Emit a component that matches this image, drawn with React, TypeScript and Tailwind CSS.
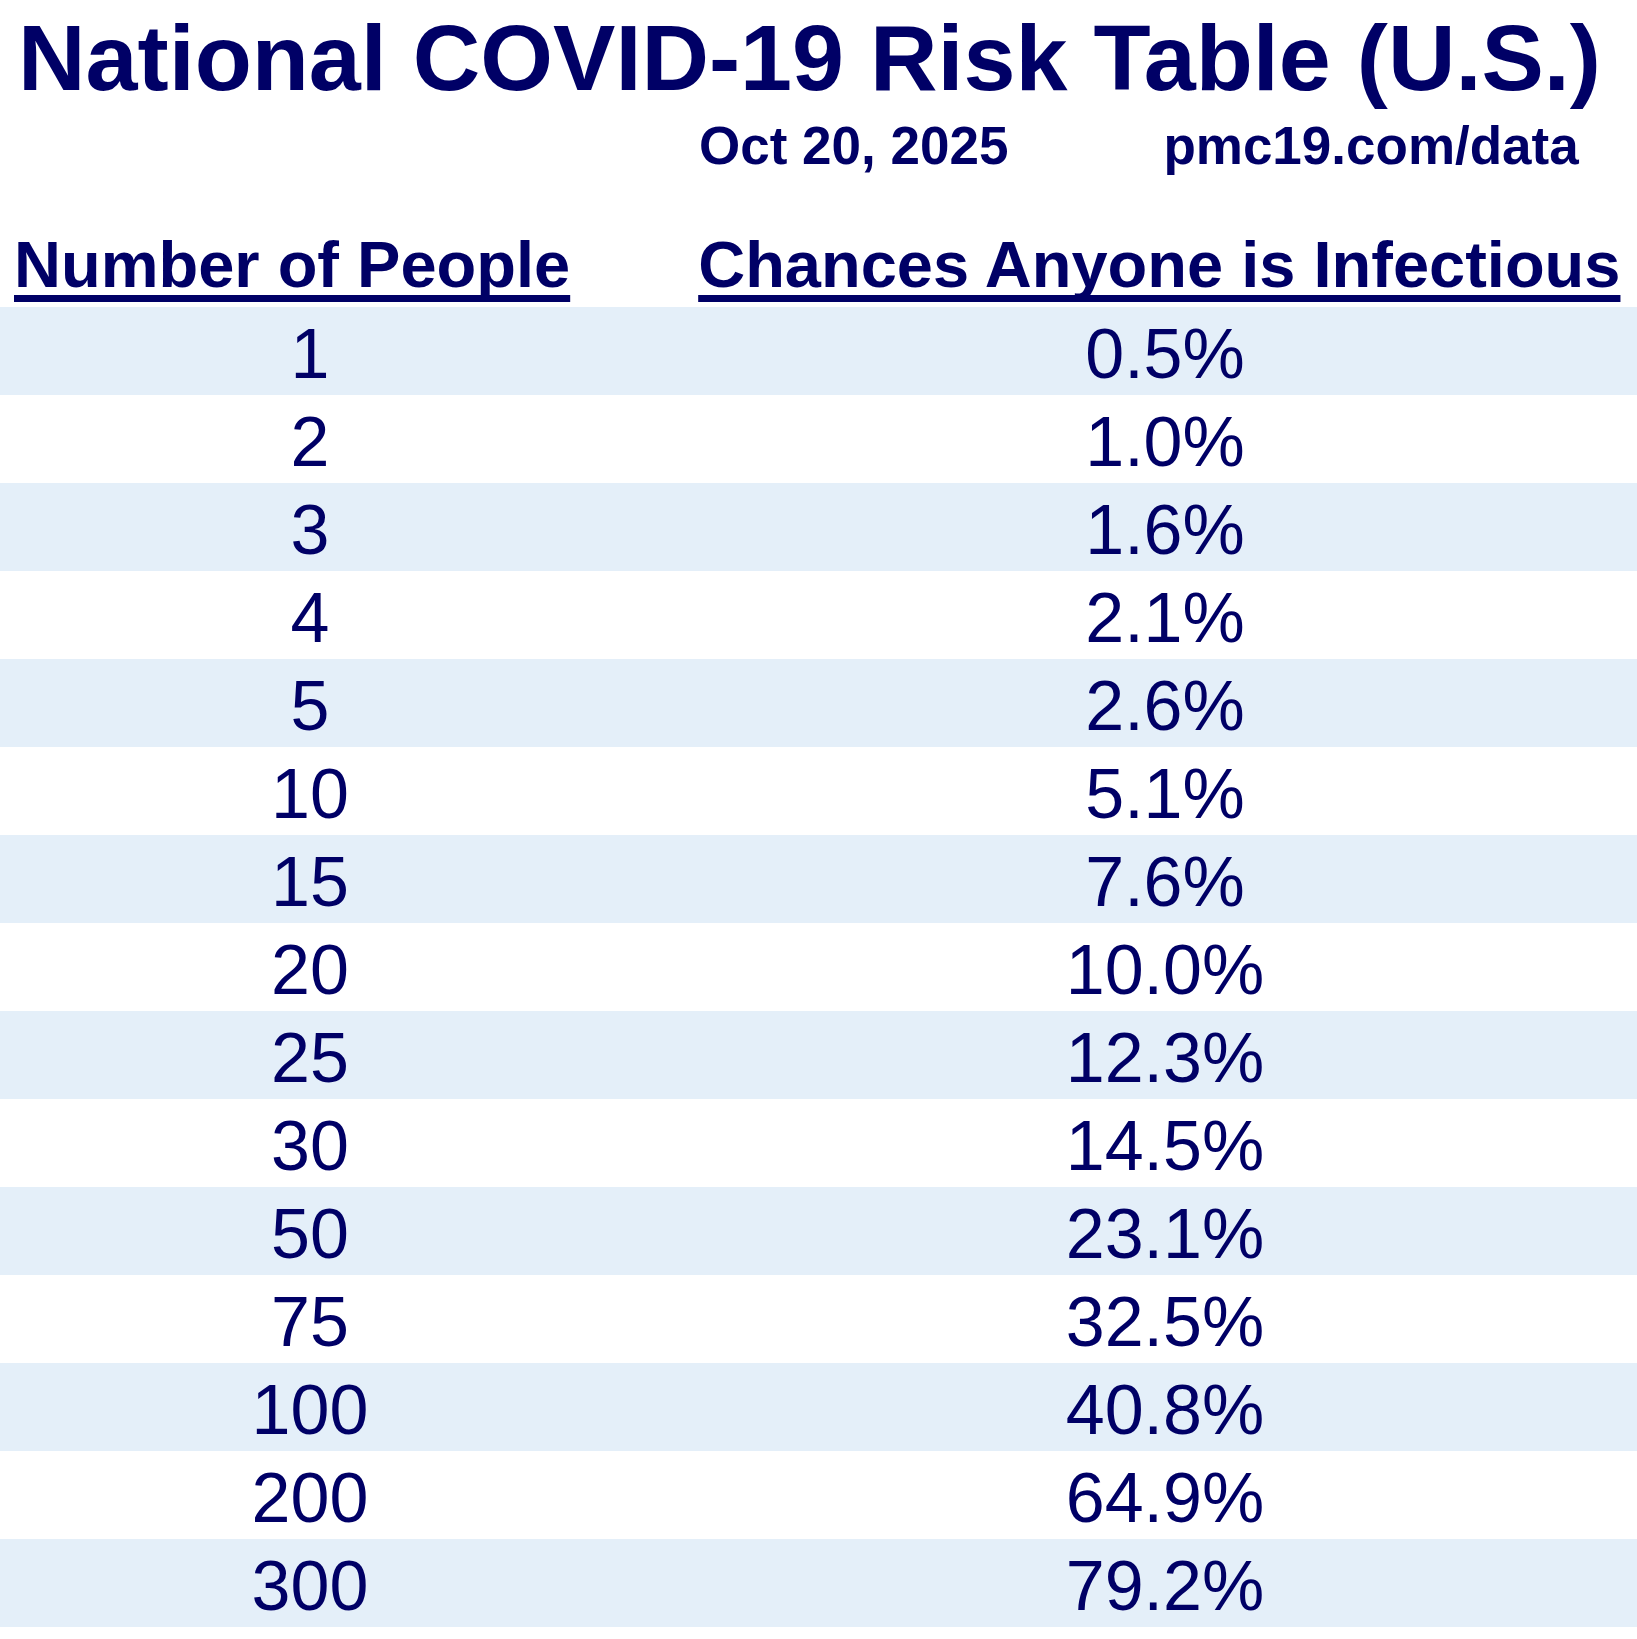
const rows: [string, string][] = [
  ['1', '0.5%'],
  ['2', '1.0%'],
  ['3', '1.6%'],
  ['4', '2.1%'],
  ['5', '2.6%'],
  ['10', '5.1%'],
  ['15', '7.6%'],
  ['20', '10.0%'],
  ['25', '12.3%'],
  ['30', '14.5%'],
  ['50', '23.1%'],
  ['75', '32.5%'],
  ['100', '40.8%'],
  ['200', '64.9%'],
  ['300', '79.2%'],
];

export default function App() {
  return (
    <div className="w-[1637px] h-[1639px] bg-white text-[#000066] font-['Liberation_Sans',Arial,sans-serif] overflow-hidden">
      {/* Title */}
      <h1 className="pl-[18px] pt-[11px] text-[93.5px] leading-[93px] font-bold whitespace-nowrap">
        National COVID-19 Risk Table (U.S.)
      </h1>

      {/* Date + source */}
      <div className="mt-[15px] flex pl-[699px] text-[53px] leading-[53px] font-bold whitespace-nowrap">
        <span>Oct 20, 2025</span>
        <span className="ml-[155px]">pmc19.com/data</span>
      </div>

      {/* Column headers */}
      <div className="mt-[60px] flex text-[65px] leading-[65px] font-bold whitespace-nowrap">
        <span className="ml-[14px] underline decoration-[7px] underline-offset-[8px] [text-decoration-skip-ink:none]">
          Number of People
        </span>
        <span className="ml-[128px] underline decoration-[7px] underline-offset-[8px] [text-decoration-skip-ink:none]">
          Chances Anyone is Infectious
        </span>
      </div>

      {/* Table rows */}
      <div className="mt-[10px]">
        {rows.map(([n, pct], i) => (
          <div
            key={n}
            className={`grid grid-cols-[620px_1fr] h-[88px] text-[70px] ${i % 2 === 0 ? 'bg-[#e4eff9]' : 'bg-white'}`}
          >
            <div className="text-center pt-[7px] leading-[81px]">{n}</div>
            <div className="text-center pl-[73px] pt-[7px] leading-[81px]">{pct}</div>
          </div>
        ))}
      </div>
    </div>
  );
}
